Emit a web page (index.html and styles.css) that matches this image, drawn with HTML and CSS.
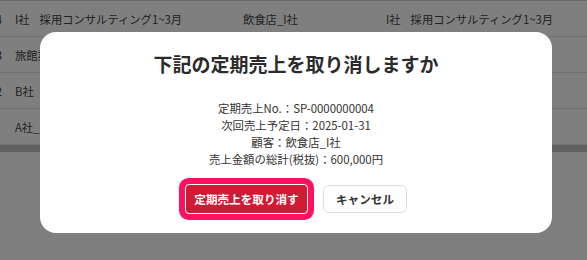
FILE: index.html
```html
<!DOCTYPE html>
<html lang="ja">
<head>
<meta charset="utf-8">
<title>定期売上の取り消し</title>
<link rel="stylesheet" href="styles.css">
</head>
<body>
<div class="page">
  <div class="table">
    <div class="row">
      <span class="num">4</span>
      <span class="cell c1"><span class="co">I社</span>採用コンサルティング1~3月</span>
      <span class="cell c2">飲食店_I社</span>
      <span class="cell c3"><span class="co">I社</span>採用コンサルティング1~3月</span>
    </div>
    <div class="row">
      <span class="num">3</span>
      <span class="cell c1">旅館業_C社</span>
      <span class="cell c2">旅館_C社</span>
      <span class="cell c3">C社</span>
    </div>
    <div class="row">
      <span class="num">2</span>
      <span class="cell c1">B社</span>
      <span class="cell c2">B社</span>
      <span class="cell c3">B社</span>
    </div>
    <div class="row">
      <span class="num"></span>
      <span class="cell c1">A社_サービス</span>
      <span class="cell c2">A社</span>
      <span class="cell c3">A社</span>
    </div>
  </div>
  <div class="scrollbar"></div>
</div>

<div class="overlay"></div>

<div class="modal" role="dialog">
  <h2 class="modal-title">下記の定期売上を取り消しますか</h2>
  <div class="details">
    <p>定期売上No.：SP-0000000004</p>
    <p>次回売上予定日：2025-01-31</p>
    <p>顧客：飲食店_I社</p>
    <p>売上金額の総計(税抜)：600,000円</p>
  </div>
  <div class="actions">
    <button class="btn btn-danger">定期売上を取り消す</button>
    <button class="btn btn-cancel">キャンセル</button>
  </div>
</div>
</body>
</html>
```

FILE: styles.css
```css
* { box-sizing: border-box; }

html, body {
  margin: 0;
  padding: 0;
  background: #fff;
  font-family: "Noto Sans CJK JP", "Noto Sans", sans-serif;
  color: #444;
  overflow: hidden;
}

.page {
  width: 587px;
  height: 260px;
  overflow: hidden;
}

.table {
  border-top: 1px solid #d4d4d4;
}

.row {
  display: grid;
  grid-template-columns: 13px 228px 143px 1fr;
  height: 36px;
  align-items: center;
  border-bottom: 1px solid #e4e4e4;
  margin-left: -11px;
  font-size: 11.3px;
  white-space: nowrap;
}

.num {
  text-align: right;
}

.cell {
  padding-left: 13px;
}

.co {
  margin-right: 10px;
}

.scrollbar {
  height: 7px;
  background: #c0c0c0;
}

.overlay {
  position: fixed;
  inset: 0;
  background: rgba(0, 0, 0, 0.5);
}

.modal {
  position: fixed;
  left: 40px;
  top: 32px;
  width: 512px;
  background: #fff;
  border-radius: 16px;
  padding: 18px 0 19px;
  display: flex;
  flex-direction: column;
  align-items: center;
  color: #333;
}

.modal-title {
  margin: 0 0 22px;
  font-size: 19px;
  line-height: 28px;
  font-weight: 700;
  color: #2b2b2b;
}

.details {
  text-align: center;
  font-size: 11.4px;
  line-height: 17px;
  color: #333;
}

.details p {
  margin: 0;
}

.actions {
  margin-top: 16px;
  display: flex;
  align-items: center;
  gap: 15px;
}

.btn {
  font-family: "Noto Sans CJK JP", "Noto Sans", sans-serif;
  font-size: 11.6px;
  font-weight: 700;
  cursor: pointer;
  padding: 0;
}

.btn-danger {
  width: 123px;
  height: 30px;
  background: #d11a33;
  color: #fff;
  border: 1px solid #fff;
  border-radius: 4px;
  box-shadow: 0 0 0 6px #ff1060;
}

.btn-cancel {
  width: 84px;
  height: 28px;
  background: #fff;
  color: #333;
  border: 1px solid #dcdcdc;
  border-radius: 6px;
}
```
